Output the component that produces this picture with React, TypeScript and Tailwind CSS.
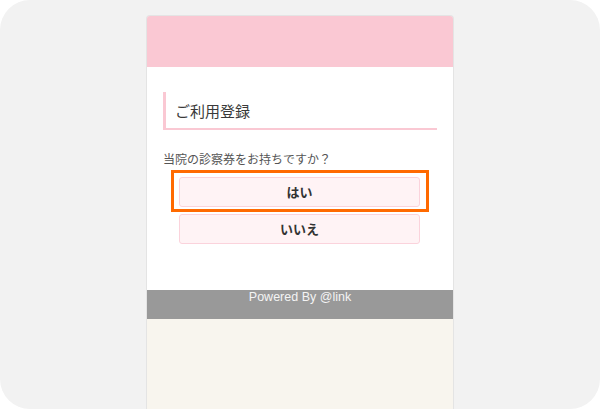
import React from "react";

export default function App() {
  const jp = { fontFamily: '"Noto Sans CJK JP", "Noto Sans", sans-serif' } as React.CSSProperties;
  return (
    <div className="w-[600px] h-[409px] bg-white overflow-hidden">
      <div className="w-full h-full rounded-[30px] bg-[#f2f2f2] flex justify-center pt-[15px]">
        <div className="w-[308px] flex flex-col border-x border-t border-[#e4e4e4] rounded-t-[4px] overflow-hidden">
          <div className="h-[51px] bg-[#fac8d3] shrink-0" />
          <div className="bg-white pt-[25px] pb-[46px] shrink-0" style={jp}>
            <div className="mx-4 h-[38px] border-l-[3px] border-b-2 border-[#fac8d3] flex items-center pl-[9px]">
              <span className="text-[15px] text-[#3a3a3a] leading-none">ご利用登録</span>
            </div>
            <div className="mt-[20px] ml-4 text-[12px] leading-[18px] text-[#555]">当院の診察券をお持ちですか？</div>
            <div className="mt-[2px] mx-auto w-[258px] border-[3px] border-[#ff6a00] pt-[4px] pb-[2px] pl-[5px]">
              <button className="w-[241px] h-[30px] bg-[#fff3f5] border border-[#fbd3dc] rounded-[3px] text-[13px] font-bold text-[#333] flex items-center justify-center">
                はい
              </button>
            </div>
            <div className="mt-[2px] flex justify-center">
              <button className="w-[241px] h-[30px] bg-[#fff3f5] border border-[#fbd3dc] rounded-[3px] text-[13px] font-bold text-[#333] flex items-center justify-center -ml-[1px]">
                いいえ
              </button>
            </div>
          </div>
          <div
            className="h-[29px] bg-[#999999] text-center text-[12.5px] leading-[15px] text-[#f4f4f4] shrink-0"
            style={{ fontFamily: '"Liberation Sans", Arial, sans-serif' }}
          >
            Powered By @link
          </div>
          <div className="flex-1 bg-[#f8f5ee]" />
        </div>
      </div>
    </div>
  );
}
